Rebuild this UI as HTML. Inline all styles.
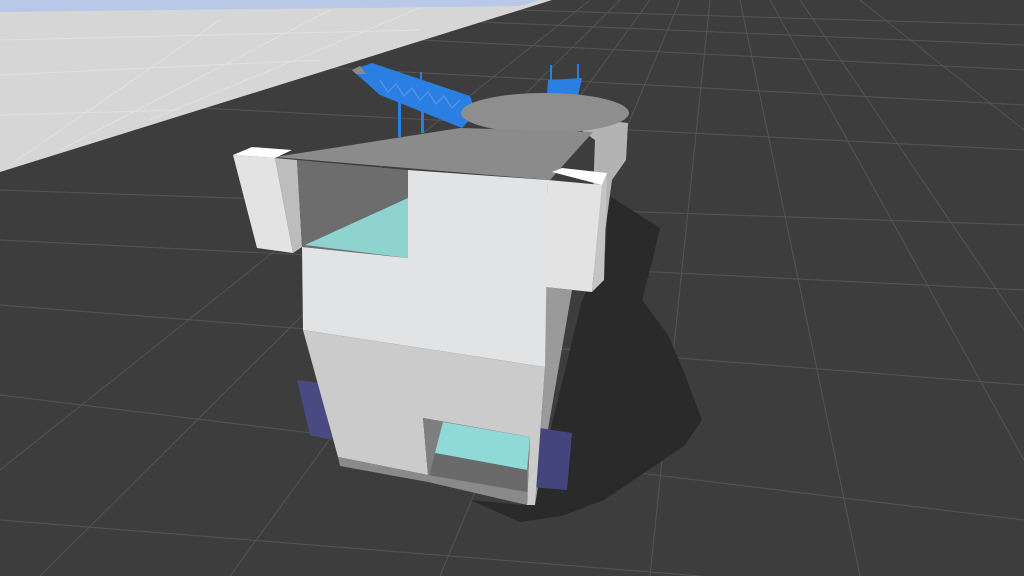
<!DOCTYPE html>
<html><head><meta charset="utf-8"><style>html,body{margin:0;padding:0;background:#3c3c3c;overflow:hidden}svg{display:block}</style></head>
<body>
<svg width="1024" height="576" viewBox="0 0 1024 576" xmlns="http://www.w3.org/2000/svg">
<rect width="1024" height="576" fill="#3d3d3d"/>
<!-- grid on dark ground -->
<g stroke="#545454" stroke-width="1" fill="none">
<line x1="0" y1="190" x2="1024" y2="225"/>
<line x1="0" y1="240" x2="1024" y2="290"/>
<line x1="0" y1="305" x2="1024" y2="385"/>
<line x1="0" y1="395" x2="1024" y2="520"/>
<line x1="0" y1="520" x2="700" y2="576"/>
<line x1="200" y1="108" x2="1024" y2="150"/>
<line x1="330" y1="68" x2="1024" y2="105"/>
<line x1="420" y1="40" x2="1024" y2="70"/>
<line x1="480" y1="22" x2="1024" y2="45"/>
<line x1="520" y1="10" x2="1024" y2="25"/>
<line x1="620" y1="0" x2="40" y2="576"/>
<line x1="680" y1="0" x2="440" y2="576"/>
<line x1="740" y1="0" x2="860" y2="576"/>
<line x1="800" y1="0" x2="1024" y2="330"/>
<line x1="860" y1="0" x2="1024" y2="130"/>
<line x1="590" y1="0" x2="0" y2="470"/>
<line x1="650" y1="0" x2="230" y2="576"/>
<line x1="710" y1="0" x2="650" y2="576"/>
<line x1="770" y1="0" x2="1024" y2="460"/>
</g>
<!-- light plane -->
<polygon points="0,0 552,0 0,172" fill="#d6d6d6"/>
<polygon points="0,0 540,0 520,6 0,12" fill="#b8c8e6"/>
<g stroke="#e6e6e6" stroke-width="1" opacity="0.7">
<line x1="0" y1="40" x2="420" y2="30"/><line x1="0" y1="75" x2="320" y2="60"/><line x1="0" y1="115" x2="180" y2="110"/>
<line x1="60" y1="150" x2="330" y2="10"/><line x1="150" y1="120" x2="420" y2="8"/><line x1="10" y1="165" x2="220" y2="20"/>
</g>
<!-- shadow -->
<polygon points="608,195 660,228 652,262 642,300 668,335 684,372 702,420 684,446 604,500 562,516 520,522 470,500 522,505 548,440 582,300 606,250" fill="#2a2a2a"/>
<!-- blue bridge -->
<g fill="#2c7fe2">
<polygon points="352,70 372,63 470,96 476,112 462,128 380,95"/>
<rect x="398" y="92" width="3" height="45"/><rect x="421" y="98" width="3" height="35"/><rect x="420" y="72" width="2" height="25"/>
<polygon points="548,80 582,78 578,96 547,94"/>
<rect x="550" y="65" width="2" height="20"/><rect x="577" y="64" width="2" height="20"/>
</g>
<g stroke="#7db0f0" stroke-width="1" opacity="0.6"><polyline points="380,80 388,92 396,84 404,96 412,88 420,100 428,92 436,104 444,96 452,108 460,100" fill="none"/></g>
<polygon points="352,70 360,66 366,74 356,74" fill="#8a8a8a"/>
<!-- cylinder -->
<polygon points="560,115 628,123 626,160 612,180 600,270 590,275 595,140" fill="#b3b3b3"/>
<ellipse cx="545" cy="113" rx="84" ry="20" fill="#8e8e8e"/>
<!-- roof -->
<polygon points="275,157 460,128 593,132 550,180" fill="#8b8b8b"/>
<!-- left block -->
<polygon points="233,155 252,147 292,150 275,158" fill="#ffffff"/>
<polygon points="233,155 275,158 293,253 257,248" fill="#e3e3e3"/>
<polygon points="275,158 297,160 302,247 293,253" fill="#bdbdbd"/>
<!-- upper cutout -->
<polygon points="297,160 408,170 408,258 302,247" fill="#6d6d6d"/>
<polygon points="305,245 408,198 408,258" fill="#8fd3cf"/>
<!-- side shade -->
<polygon points="545,287 572,290 535,505 545,367" fill="#9a9a9a"/>
<!-- purple panels -->
<polygon points="297,380 320,383 332,440 310,435" fill="#4a4a82"/>
<polygon points="533,427 572,433 567,490 532,487" fill="#45457d"/>
<!-- main front upper -->
<polygon points="408,170 548,180 545,367 303,330 302,247 408,258" fill="#e2e3e5"/>
<!-- lower front -->
<polygon points="303,330 545,367 535,505 527,505 530,437 423,418 428,475 338,457" fill="#cbcbcc"/>
<!-- lower cutout -->
<polygon points="423,418 530,437 527,505 428,475" fill="#7f7f7f"/>
<polygon points="443,422 530,437 527,470 435,453" fill="#8fd9d6"/>
<polygon points="435,453 527,470 527,505 428,480" fill="#6a6a6a"/>
<polygon points="338,457 428,475 428,482 340,466" fill="#8a8a8a"/>
<polygon points="428,475 527,492 527,505 428,482" fill="#8a8a8a"/>
<!-- right block -->
<polygon points="552,172 562,168 607,173 602,185" fill="#ffffff"/>
<polygon points="548,180 602,185 592,292 545,287" fill="#e3e3e3"/>
<polygon points="602,185 607,173 604,280 592,292" fill="#c4c4c4"/>
</svg>
</body></html>
